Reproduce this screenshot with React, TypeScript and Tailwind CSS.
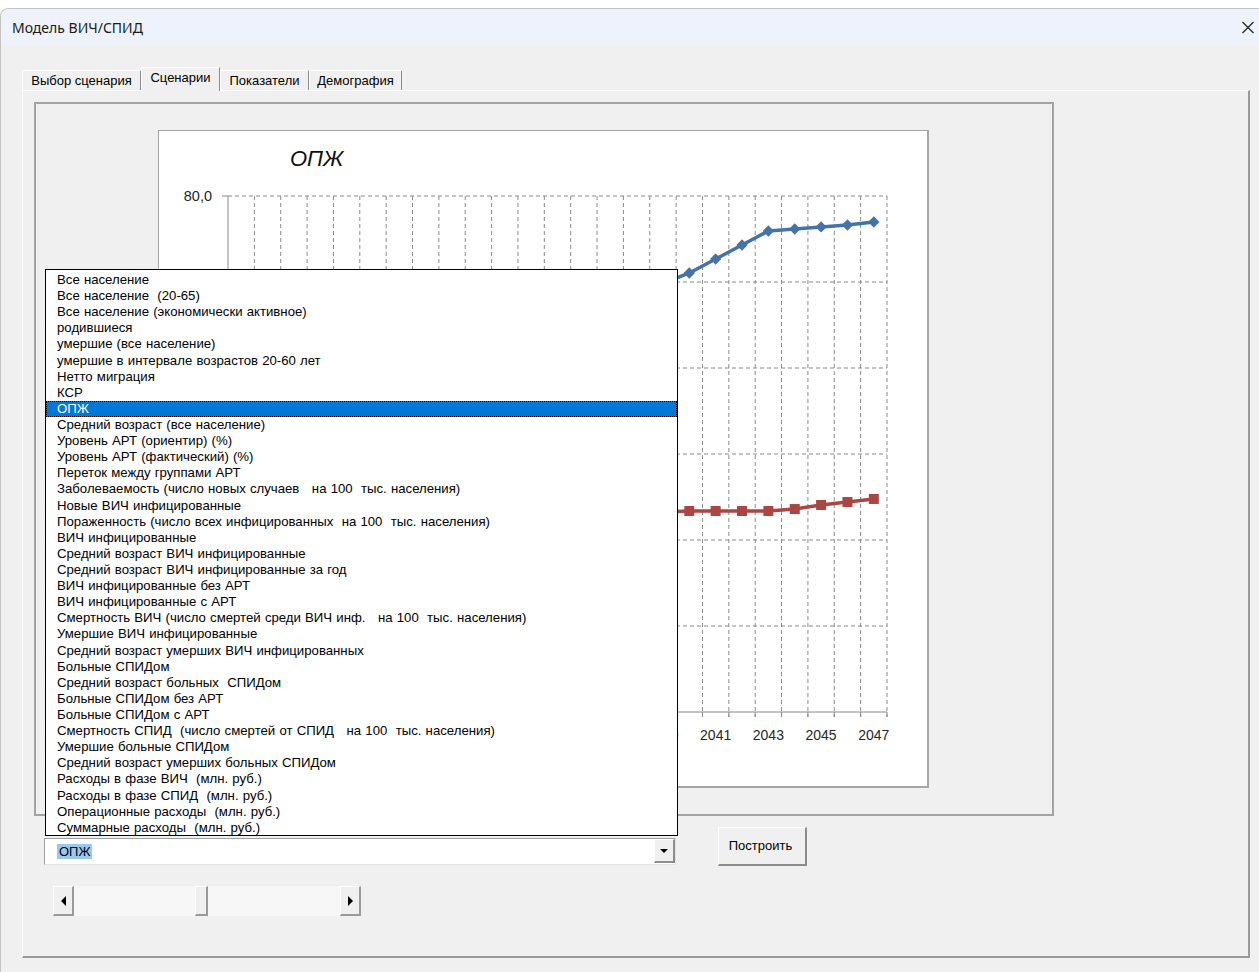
import { useState } from "react";

const indicators = [
  "Все население",
  "Все население  (20-65)",
  "Все население (экономически активное)",
  "родившиеся",
  "умершие (все население)",
  "умершие в интервале возрастов 20-60 лет",
  "Нетто миграция",
  "КСР",
  "ОПЖ",
  "Средний возраст (все население)",
  "Уровень АРТ (ориентир) (%)",
  "Уровень АРТ (фактический) (%)",
  "Переток между группами АРТ",
  "Заболеваемость (число новых случаев   на 100  тыс. населения)",
  "Новые ВИЧ инфицированные",
  "Пораженность (число всех инфицированных  на 100  тыс. населения)",
  "ВИЧ инфицированные",
  "Средний возраст ВИЧ инфицированные",
  "Средний возраст ВИЧ инфицированные за год",
  "ВИЧ инфицированные без АРТ",
  "ВИЧ инфицированные с АРТ",
  "Смертность ВИЧ (число смертей среди ВИЧ инф.   на 100  тыс. населения)",
  "Умершие ВИЧ инфицированные",
  "Средний возраст умерших ВИЧ инфицированных",
  "Больные СПИДом",
  "Средний возраст больных  СПИДом",
  "Больные СПИДом без АРТ",
  "Больные СПИДом с АРТ",
  "Смертность СПИД  (число смертей от СПИД   на 100  тыс. населения)",
  "Умершие больные СПИДом",
  "Средний возраст умерших больных СПИДом",
  "Расходы в фазе ВИЧ  (млн. руб.)",
  "Расходы в фазе СПИД  (млн. руб.)",
  "Операционные расходы  (млн. руб.)",
  "Суммарные расходы  (млн. руб.)",
];

const tabs = [
  { label: "Выбор сценария", w: "w-[119px]" },
  { label: "Сценарии", w: "w-[79px]" },
  { label: "Показатели", w: "w-[89px]" },
  { label: "Демография", w: "w-[93px]" },
];

// ОПЖ by year, 2023..2047, two scenarios
const years = Array.from({ length: 25 }, (_, i) => 2023 + i);
const scenarioA = [
  64.8, 65.1, 65.4, 65.8, 66.1, 66.4, 66.7, 67.0, 67.3, 67.6, 67.9, 68.2, 68.5,
  68.8, 69.1, 69.4, 69.8, 71.05, 72.67, 74.3, 75.93, 76.16, 76.4, 76.63, 76.98,
];
const scenarioB = [
  43.0, 43.1, 43.0, 43.2, 43.1, 43.2, 43.3, 43.2, 43.3, 43.2, 43.3, 43.3, 43.2,
  43.3, 43.3, 43.2, 43.26, 43.37, 43.37, 43.37, 43.37, 43.6, 44.07, 44.42, 44.77,
];

const plot = { left: 69, right: 728, top: 65, bottom: 581, min: 20, max: 80 };
const colW = (plot.right - plot.left) / years.length;
const px = (i: number) => plot.left + (i + 0.5) * colW;
const py = (v: number) =>
  plot.top + ((plot.max - v) / (plot.max - plot.min)) * (plot.bottom - plot.top);

function Chart() {
  const yTicks = [80, 70, 60, 50, 40, 30, 20];
  const line = (data: number[]) => data.map((v, i) => `${px(i)},${py(v)}`).join(" ");

  return (
    <svg width="768" height="655" className="block">
      <text x="131" y="35" fontSize="22" fontStyle="italic" fill="#111" fontFamily="Liberation Sans, Arial, sans-serif">
        ОПЖ
      </text>

      {yTicks.slice(0, -1).map((v) => (
        <line key={v} x1={plot.left} x2={plot.right} y1={py(v)} y2={py(v)} stroke="#8a8a8a" strokeDasharray="4 3" />
      ))}
      {years.map((_, i) => (
        <line
          key={i}
          x1={plot.left + (i + 1) * colW}
          x2={plot.left + (i + 1) * colW}
          y1={plot.top}
          y2={plot.bottom + 5}
          stroke="#8a8a8a"
          strokeDasharray="4 3"
        />
      ))}
      {years.map((_, i) => (
        <line key={i} x1={plot.left + (i + 1) * colW} x2={plot.left + (i + 1) * colW} y1={plot.bottom} y2={plot.bottom + 5} stroke="#8a8a8a" />
      ))}
      {yTicks.map((v) => (
        <line key={v} x1={plot.left - 6} x2={plot.left} y1={py(v)} y2={py(v)} stroke="#8a8a8a" />
      ))}
      <line x1={plot.left} x2={plot.left} y1={plot.top} y2={plot.bottom} stroke="#8a8a8a" />
      <line x1={plot.left} x2={plot.right} y1={plot.bottom} y2={plot.bottom} stroke="#8a8a8a" />

      {yTicks.map((v) => (
        <text key={v} x={plot.left - 16} y={py(v) + 5} textAnchor="end" fontSize="14.5" fill="#262626" fontFamily="Liberation Sans, Arial, sans-serif">
          {v.toFixed(1).replace(".", ",")}
        </text>
      ))}
      {years.map((y, i) =>
        i % 2 === 0 ? (
          <text key={y} x={px(i)} y={plot.bottom + 28} textAnchor="middle" fontSize="14" fill="#262626" fontFamily="Liberation Sans, Arial, sans-serif">
            {y}
          </text>
        ) : null
      )}

      <polyline points={line(scenarioA)} fill="none" stroke="#4572a7" strokeWidth="3.5" strokeLinejoin="round" />
      {scenarioA.map((v, i) => (
        <rect key={i} x={px(i) - 4} y={py(v) - 4} width="8" height="8" fill="#4572a7" transform={`rotate(45 ${px(i)} ${py(v)})`} />
      ))}

      <polyline points={line(scenarioB)} fill="none" stroke="#aa4643" strokeWidth="3.5" strokeLinejoin="round" />
      {scenarioB.map((v, i) => (
        <rect key={i} x={px(i) - 5} y={py(v) - 5} width="10" height="10" fill="#aa4643" />
      ))}
    </svg>
  );
}

function IndicatorList({ selected }: { selected: number }) {
  return (
    <div className="absolute left-0 bottom-[28px] z-20 w-[633px] h-[567px] bg-white border border-black pt-[2px] text-[13.2px] [word-spacing:0.5px]">
      {indicators.map((name, i) => (
        <div
          key={i}
          className={
            i === selected
              ? "h-[16.12px] leading-[16.12px] pl-[11px] whitespace-pre bg-[#0078d7] text-white outline-1 outline-dotted outline-black -outline-offset-1"
              : "h-[16.12px] leading-[16.12px] pl-[11px] whitespace-pre text-black"
          }
        >
          {name}
        </div>
      ))}
    </div>
  );
}

function ScrollBar() {
  return (
    <div className="flex w-[308px] h-[30px] bg-[#f7f7f7]">
      <div className="w-[21px] h-full flex items-center justify-center bg-[#f0f0f0] border-t border-l border-white border-r-2 border-b-2 border-r-[#9a9a9a] border-b-[#9a9a9a]">
        <div className="w-0 h-0 border-y-[5px] border-y-transparent border-r-[5px] border-r-black" />
      </div>
      <div className="flex-1 flex">
        <div className="w-[121px]" />
        <div className="w-[13px] h-full bg-[#f0f0f0] border-t border-l border-white border-r-2 border-b-2 border-r-[#9a9a9a] border-b-[#9a9a9a]" />
      </div>
      <div className="w-[21px] h-full flex items-center justify-center bg-[#f0f0f0] border-t border-l border-white border-r-2 border-b-2 border-r-[#9a9a9a] border-b-[#9a9a9a]">
        <div className="w-0 h-0 border-y-[5px] border-y-transparent border-l-[5px] border-l-black" />
      </div>
    </div>
  );
}

export default function App() {
  const [tab, setTab] = useState(1);
  const [selected] = useState(8);

  return (
    <div className="w-[1259px] h-[972px] bg-white overflow-hidden text-[13px] text-black font-['Liberation_Sans',Arial,sans-serif]">
      <div className="h-[8px]" />
      <div className="flex flex-col h-[964px] bg-[#f0f0f0] rounded-tl-[8px] border-l border-t border-[#c4c4c4]">
        <div className="h-[36px] shrink-0 flex items-center justify-between pl-[11px] pr-[5px] bg-[#eef2fa] rounded-tl-[8px]">
          <span className="text-[14px] text-[#1a1a1a] font-['Noto_Sans',sans-serif]">Модель ВИЧ/СПИД</span>
          <svg width="12" height="13" viewBox="0 0 12 13" className="block">
            <path d="M0.5 1 L11.5 12 M11.5 1 L0.5 12" stroke="#1f1f1f" strokeWidth="1.2" />
          </svg>
        </div>

        <div className="pl-[21px] pt-[22px]">
          <div className="flex items-end h-[23px]">
            {tabs.map((t, i) => (
              <div
                key={t.label}
                onClick={() => setTab(i)}
                className={
                  i === tab
                    ? `${t.w} relative z-10 -mb-px h-[24px] pb-[4px] flex items-center justify-center bg-[#f0f0f0] border-t border-l border-white border-r border-r-[#8c8c8c] cursor-default`
                    : `${t.w} h-[20px] flex items-center justify-center border-t border-l border-white border-r border-r-[#8c8c8c] cursor-default`
                }
              >
                {t.label}
              </div>
            ))}
          </div>

          <div className="w-[1228px] h-[868px] border-t border-l border-white border-r-2 border-b-2 border-r-[#9a9a9a] border-b-[#9a9a9a]">
            <div className="ml-[11px] mt-[11px] w-[1020px] h-[714px] border-2 border-[#a3a3a3]">
              <div className="ml-[122px] mt-[26px] w-[771px] h-[658px] bg-white border border-[#a6a6a6] border-r-2 border-b-2">
                <Chart />
              </div>
            </div>

            <div className="flex items-start ml-[21px] mt-[11px]">
              <div className="relative mt-[11px] w-[632px] h-[27px] flex bg-white border-t border-l border-[#a0a0a0] border-b border-r border-b-[#e3e3e3] border-r-[#e3e3e3]">
                <IndicatorList selected={selected} />
                <div className="flex-1 flex items-center pl-[12px]">
                  <span className="bg-[#99c9ef] px-[2px] leading-[15px]">{indicators[selected]}</span>
                </div>
                <div className="w-[21px] h-[24px] flex items-center justify-center bg-[#f0f0f0] border-t border-l border-white border-r-2 border-b-2 border-r-[#8c8c8c] border-b-[#8c8c8c]">
                  <div className="w-0 h-0 border-x-[4px] border-x-transparent border-t-[4px] border-t-black" />
                </div>
              </div>
              <button className="ml-[42px] w-[89px] h-[39px] pr-[3px] bg-[#f0f0f0] border-t border-l border-white border-r-2 border-b-2 border-r-[#8c8c8c] border-b-[#8c8c8c] text-[13px] text-black">
                Построить
              </button>
            </div>

            <div className="ml-[30px] mt-[20px]">
              <ScrollBar />
            </div>
          </div>
        </div>
      </div>
    </div>
  );
}
